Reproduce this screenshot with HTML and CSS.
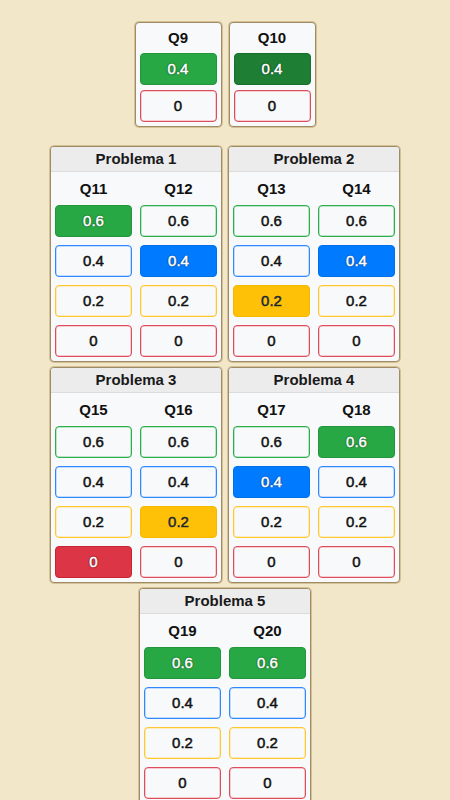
FILE: index.html
```html
<!DOCTYPE html>
<html lang="pt">
<head>
<meta charset="utf-8">
<title>Notas</title>
<link rel="stylesheet" href="styles.css">
</head>
<body>
<div class="page">
  <div class="top-row">
    <div class="qcard">
      <div class="qlabel">Q9</div>
      <div class="btns tight">
        <div class="btn success filled">0.4</div>
        <div class="btn danger">0</div>
      </div>
    </div>
    <div class="qcard">
      <div class="qlabel">Q10</div>
      <div class="btns tight">
        <div class="btn success filled dark">0.4</div>
        <div class="btn danger">0</div>
      </div>
    </div>
  </div>

  <div class="problems">
    <div class="pcard">
      <div class="phead">Problema 1</div>
      <div class="pcols">
        <div class="col">
          <div class="qlabel tall">Q11</div>
          <div class="btns">
            <div class="btn success filled">0.6</div>
            <div class="btn primary">0.4</div>
            <div class="btn warning">0.2</div>
            <div class="btn danger">0</div>
          </div>
        </div>
        <div class="col">
          <div class="qlabel tall">Q12</div>
          <div class="btns">
            <div class="btn success">0.6</div>
            <div class="btn primary filled">0.4</div>
            <div class="btn warning">0.2</div>
            <div class="btn danger">0</div>
          </div>
        </div>
      </div>
    </div>

    <div class="pcard">
      <div class="phead">Problema 2</div>
      <div class="pcols">
        <div class="col">
          <div class="qlabel tall">Q13</div>
          <div class="btns">
            <div class="btn success">0.6</div>
            <div class="btn primary">0.4</div>
            <div class="btn warning filled">0.2</div>
            <div class="btn danger">0</div>
          </div>
        </div>
        <div class="col">
          <div class="qlabel tall">Q14</div>
          <div class="btns">
            <div class="btn success">0.6</div>
            <div class="btn primary filled">0.4</div>
            <div class="btn warning">0.2</div>
            <div class="btn danger">0</div>
          </div>
        </div>
      </div>
    </div>

    <div class="pcard">
      <div class="phead">Problema 3</div>
      <div class="pcols">
        <div class="col">
          <div class="qlabel tall">Q15</div>
          <div class="btns">
            <div class="btn success">0.6</div>
            <div class="btn primary">0.4</div>
            <div class="btn warning">0.2</div>
            <div class="btn danger filled">0</div>
          </div>
        </div>
        <div class="col">
          <div class="qlabel tall">Q16</div>
          <div class="btns">
            <div class="btn success">0.6</div>
            <div class="btn primary">0.4</div>
            <div class="btn warning filled">0.2</div>
            <div class="btn danger">0</div>
          </div>
        </div>
      </div>
    </div>

    <div class="pcard">
      <div class="phead">Problema 4</div>
      <div class="pcols">
        <div class="col">
          <div class="qlabel tall">Q17</div>
          <div class="btns">
            <div class="btn success">0.6</div>
            <div class="btn primary filled">0.4</div>
            <div class="btn warning">0.2</div>
            <div class="btn danger">0</div>
          </div>
        </div>
        <div class="col">
          <div class="qlabel tall">Q18</div>
          <div class="btns">
            <div class="btn success filled">0.6</div>
            <div class="btn primary">0.4</div>
            <div class="btn warning">0.2</div>
            <div class="btn danger">0</div>
          </div>
        </div>
      </div>
    </div>

    <div class="pcard">
      <div class="phead">Problema 5</div>
      <div class="pcols">
        <div class="col">
          <div class="qlabel tall">Q19</div>
          <div class="btns">
            <div class="btn success filled">0.6</div>
            <div class="btn primary">0.4</div>
            <div class="btn warning">0.2</div>
            <div class="btn danger">0</div>
          </div>
        </div>
        <div class="col">
          <div class="qlabel tall">Q20</div>
          <div class="btns">
            <div class="btn success filled">0.6</div>
            <div class="btn primary">0.4</div>
            <div class="btn warning">0.2</div>
            <div class="btn danger">0</div>
          </div>
        </div>
      </div>
    </div>
  </div>
</div>
</body>
</html>
```

FILE: styles.css
```css
* { box-sizing: border-box; }

html, body {
  margin: 0;
  padding: 0;
  background: #f3e7ca;
}

body {
  font-family: "Liberation Sans", Arial, sans-serif;
  color: #111;
}

.page {
  display: flex;
  flex-direction: column;
  align-items: center;
  padding-top: 22px;
}

.top-row {
  display: flex;
  gap: 7px;
  margin-bottom: 19px;
}

.problems {
  width: 350px;
  display: flex;
  flex-wrap: wrap;
  justify-content: center;
  gap: 5px 6px;
}

.qcard,
.pcard {
  background: #f8f9fa;
  border: 1px solid #9f8b66;
  box-shadow: 0 0 0 1px #d4c196;
  border-radius: 4px;
}

.qcard {
  width: 87px;
  padding: 0 4px 4px;
}

.pcard {
  width: 172px;
  overflow: hidden;
}

.phead {
  height: 25px;
  line-height: 24px;
  background: #ececed;
  border-bottom: 1px solid #dcdcdc;
  text-align: center;
  font-size: 15px;
  font-weight: 700;
  color: #1a1a1a;
}

.pcols {
  display: grid;
  grid-template-columns: 77px 77px;
  column-gap: 8px;
  padding: 0 4px 4px;
}

.qlabel {
  height: 30px;
  line-height: 30px;
  text-align: center;
  font-size: 15px;
  font-weight: 700;
}

.qlabel.tall {
  height: 33px;
  line-height: 33px;
}

.btns {
  display: flex;
  flex-direction: column;
  gap: 8px;
}

.btns.tight {
  gap: 5px;
}

.btn {
  height: 32px;
  line-height: 30px;
  border: 1px solid;
  border-radius: 4px;
  text-align: center;
  font-size: 15px;
  background: #f8f9fa;
  color: #111;
  -webkit-text-stroke: 0.5px #111;
  box-shadow: inset 0 0 0 0.5px currentColor;
}

.btn.success { border-color: #2fae4d; box-shadow: inset 0 0 0 0.5px #7fd095; }
.btn.primary { border-color: #2f88fd; box-shadow: inset 0 0 0 0.5px #8fc0ff; }
.btn.warning { border-color: #ffc730; box-shadow: inset 0 0 0 0.5px #ffe08a; }
.btn.danger  { border-color: #dd4d5b; box-shadow: inset 0 0 0 0.5px #f0a0a8; }

.btn.filled {
  color: #fff;
  -webkit-text-stroke: 0.5px #fff;
  box-shadow: none;
}

.btn.success.filled {
  background: #28a745;
  border-color: #23963d;
  text-shadow: 0 0 2px #0d4419, 0 0 1px #0d4419, 0 0 1px #0d4419;
}

.btn.success.filled.dark {
  background: #1e7e34;
  border-color: #1a6e2d;
  text-shadow: 0 0 2px #06300f, 0 0 1px #06300f, 0 0 1px #06300f;
}

.btn.primary.filled {
  background: #007bff;
  border-color: #0070e8;
  text-shadow: 0 0 2px #00336e, 0 0 1px #00336e, 0 0 1px #00336e;
}

.btn.warning.filled {
  background: #ffc107;
  border-color: #f5b800;
  color: #212529;
  -webkit-text-stroke: 0.5px #212529;
  text-shadow: 0 0 1px #ffe27a;
}

.btn.danger.filled {
  background: #dc3545;
  border-color: #c82333;
  text-shadow: 0 0 2px #5a0a13, 0 0 1px #5a0a13, 0 0 1px #5a0a13;
}
```
